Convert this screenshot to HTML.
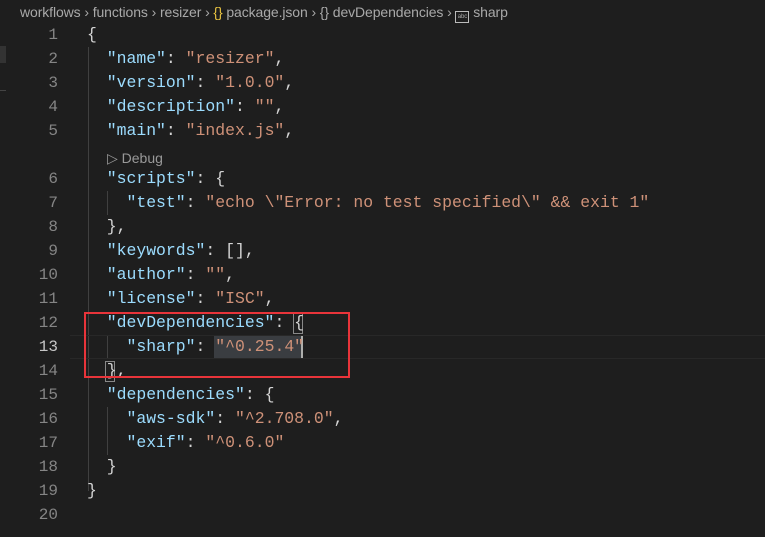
<!DOCTYPE html>
<html><head><style>
html,body{margin:0;padding:0;background:#1e1e1e;width:765px;height:537px;overflow:hidden;position:relative}
.bc{position:absolute;top:3px;left:20px;font:14px "Liberation Sans",sans-serif;color:#a9a9a9;letter-spacing:-0.1px;white-space:pre;line-height:18px}
.bc .y{color:#e8c341}
.ln{position:absolute;right:707px;width:40px;text-align:right;font:16px "Liberation Mono",monospace;color:#858585;height:24px;line-height:24px}
.cd{position:absolute;left:87px;font:16.45px "Liberation Mono",monospace;color:#d4d4d4;white-space:pre;height:24px;line-height:24px}
.k{color:#9cdcfe}.s{color:#ce9178}
.g{position:absolute;width:1px;background:#404040}
</style></head><body>
<div class="bc">workflows › functions › resizer › <span class="y">{}</span> package.json › {} devDependencies › <span style="display:inline-block;width:12px;height:10px;border:1px solid #bbb;vertical-align:-1px;font-size:6px;line-height:10px;text-align:center">abc</span> sharp</div>
<div style="position:absolute;left:0;top:46px;width:6px;height:17px;background:#333"></div>
<div style="position:absolute;left:0;top:90px;width:6px;height:1px;background:#444"></div>

<div class="g" style="left:88px;top:47px;height:444px"></div>
<div class="g" style="left:107px;top:191px;height:24px"></div>
<div class="g" style="left:107px;top:335px;height:24px"></div>
<div class="g" style="left:107px;top:407px;height:48px"></div>

<div style="position:absolute;left:70px;top:335px;width:695px;height:22px;border-top:1px solid #282828;border-bottom:1px solid #282828"></div>
<div style="position:absolute;left:214px;top:336px;width:88px;height:22px;background:#3a3d41"></div>
<div style="position:absolute;left:301px;top:336px;width:2px;height:22px;background:#aeafad"></div>
<div style="position:absolute;left:293px;top:313px;width:10px;height:21px;border:1px solid #888;box-sizing:border-box"></div>
<div style="position:absolute;left:105px;top:361px;width:10px;height:21px;border:1px solid #888;box-sizing:border-box"></div>

<div class="ln" style="top:23px">1</div><div class="cd" style="top:23px">{</div>
<div class="ln" style="top:47px">2</div><div class="cd" style="top:47px">  <span class="k">"name"</span>: <span class="s">"resizer"</span>,</div>
<div class="ln" style="top:71px">3</div><div class="cd" style="top:71px">  <span class="k">"version"</span>: <span class="s">"1.0.0"</span>,</div>
<div class="ln" style="top:95px">4</div><div class="cd" style="top:95px">  <span class="k">"description"</span>: <span class="s">""</span>,</div>
<div class="ln" style="top:119px">5</div><div class="cd" style="top:119px">  <span class="k">"main"</span>: <span class="s">"index.js"</span>,</div>
<div style="position:absolute;left:107px;top:148px;font:14px 'Liberation Sans',sans-serif;color:#999;line-height:20px">▷ Debug</div>
<div class="ln" style="top:167px">6</div><div class="cd" style="top:167px">  <span class="k">"scripts"</span>: {</div>
<div class="ln" style="top:191px">7</div><div class="cd" style="top:191px">    <span class="k">"test"</span>: <span class="s">"echo \"Error: no test specified\" &amp;&amp; exit 1"</span></div>
<div class="ln" style="top:215px">8</div><div class="cd" style="top:215px">  },</div>
<div class="ln" style="top:239px">9</div><div class="cd" style="top:239px">  <span class="k">"keywords"</span>: [],</div>
<div class="ln" style="top:263px">10</div><div class="cd" style="top:263px">  <span class="k">"author"</span>: <span class="s">""</span>,</div>
<div class="ln" style="top:287px">11</div><div class="cd" style="top:287px">  <span class="k">"license"</span>: <span class="s">"ISC"</span>,</div>
<div class="ln" style="top:311px">12</div><div class="cd" style="top:311px">  <span class="k">"devDependencies"</span>: {</div>
<div class="ln" style="top:335px;color:#c6c6c6">13</div><div class="cd" style="top:335px">    <span class="k">"sharp"</span>: <span class="s">"^0.25.4"</span></div>
<div class="ln" style="top:359px">14</div><div class="cd" style="top:359px">  },</div>
<div class="ln" style="top:383px">15</div><div class="cd" style="top:383px">  <span class="k">"dependencies"</span>: {</div>
<div class="ln" style="top:407px">16</div><div class="cd" style="top:407px">    <span class="k">"aws-sdk"</span>: <span class="s">"^2.708.0"</span>,</div>
<div class="ln" style="top:431px">17</div><div class="cd" style="top:431px">    <span class="k">"exif"</span>: <span class="s">"^0.6.0"</span></div>
<div class="ln" style="top:455px">18</div><div class="cd" style="top:455px">  }</div>
<div class="ln" style="top:479px">19</div><div class="cd" style="top:479px">}</div>
<div class="ln" style="top:503px">20</div>

<div style="position:absolute;left:84px;top:312px;width:266px;height:66px;border:2px solid #e8343a;box-sizing:border-box"></div>
</body></html>
